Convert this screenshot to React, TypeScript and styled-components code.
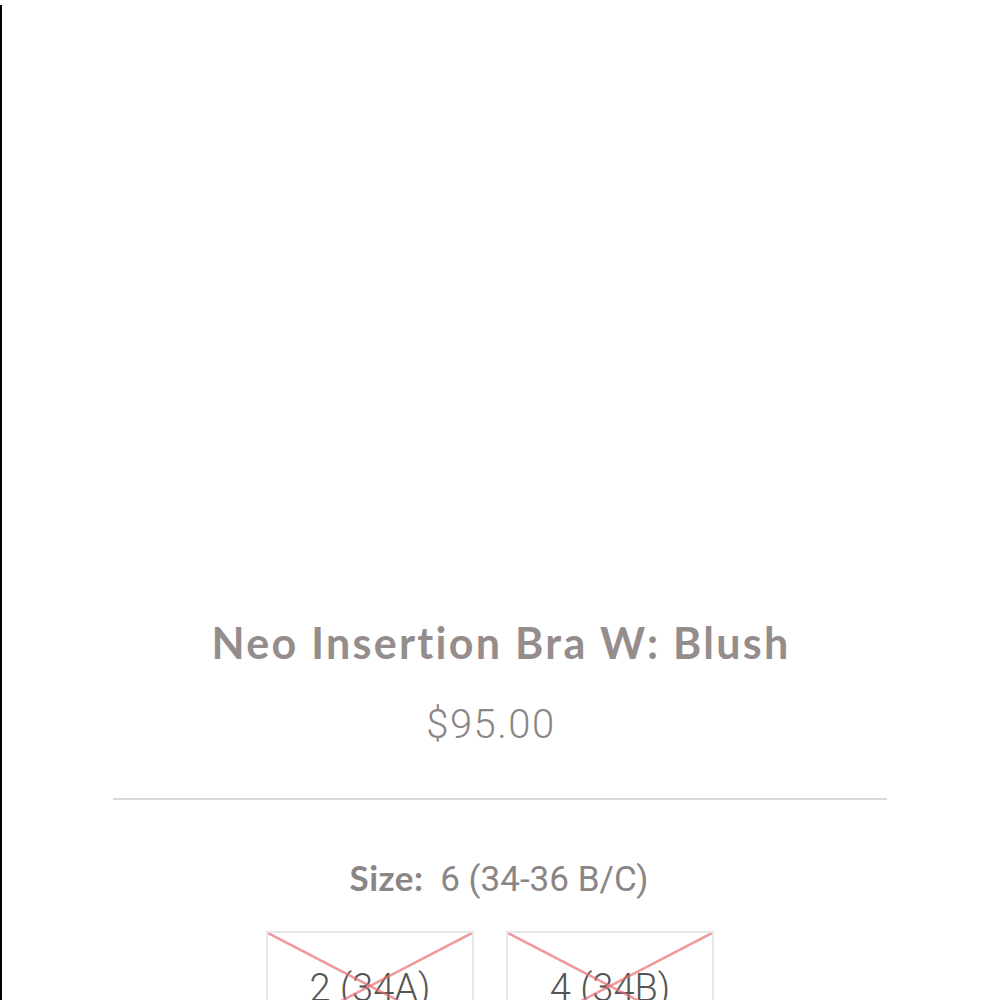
import styled, { createGlobalStyle } from 'styled-components';

const GlobalStyle = createGlobalStyle`
  html, body {
    margin: 0;
    padding: 0;
    background: #fff;
  }
  body {
    font-family: 'Roboto', 'Liberation Sans', sans-serif;
  }
`;

type SizeOption = { label: string; soldOut: boolean };

const sizes: SizeOption[] = [
  { label: '2 (34A)', soldOut: true },
  { label: '4 (34B)', soldOut: true },
];

export default function App() {
  return (
    <>
      <GlobalStyle />
      <Frame>
        <Gallery />
        <Title>Neo Insertion Bra W: Blush</Title>
        <Price>$95.00</Price>
        <Divider />
        <SizeLabel>
          <strong>Size:</strong> 6 (34-36 B/C)
        </SizeLabel>
        <SizeRow>
          {sizes.map((s) => (
            <SizeBox key={s.label}>
              {s.soldOut && (
                <Cross viewBox="0 0 100 100" preserveAspectRatio="none">
                  <line x1="0" y1="0" x2="100" y2="100" />
                  <line x1="100" y1="0" x2="0" y2="100" />
                </Cross>
              )}
              <SizeText>{s.label}</SizeText>
            </SizeBox>
          ))}
        </SizeRow>
      </Frame>
    </>
  );
}

const Frame = styled.div`
  margin-top: 5px;
  height: 995px;
  border-left: 2px solid #000;
  overflow: hidden;
  display: flex;
  flex-direction: column;
  align-items: center;
`;

const Gallery = styled.div`
  height: 613px;
  width: 100%;
  flex-shrink: 0;
`;

const Title = styled.h1`
  margin: 0;
  font-family: 'Lato', sans-serif;
  font-weight: 700;
  font-size: 43px;
  line-height: 50px;
  letter-spacing: 2.3px;
  color: #958c8c;
  text-align: center;
`;

const Price = styled.div`
  margin-top: 34px;
  margin-right: 20px;
  font-family: 'Roboto', sans-serif;
  font-weight: 300;
  font-size: 40px;
  line-height: 46px;
  letter-spacing: 1.5px;
  color: #8c8585;
`;

const Divider = styled.hr`
  margin: 50px 0 0;
  width: 774px;
  border: 0;
  border-top: 2px solid #d9d9d9;
  margin-left: -2px;
`;

const SizeLabel = styled.div`
  margin-top: 56px;
  margin-left: -4px;
  font-family: 'Roboto', sans-serif;
  font-weight: 400;
  font-size: 35px;
  line-height: 42px;
  color: #8c8585;

  strong {
    font-family: 'Lato', sans-serif;
    font-weight: 700;
    margin-right: 8px;
    letter-spacing: 0.5px;
  }
`;

const SizeRow = styled.div`
  margin-top: 30px;
  margin-right: 22px;
  display: flex;
  gap: 32px;
`;

const SizeBox = styled.div`
  position: relative;
  width: 208px;
  height: 110px;
  box-sizing: border-box;
  border: 2px solid #e6e6e6;
  display: flex;
  align-items: center;
  justify-content: center;
`;

const Cross = styled.svg`
  position: absolute;
  inset: 0;
  width: 100%;
  height: 100%;

  line {
    stroke: rgba(232, 110, 115, 0.7);
    stroke-width: 2.5px;
    vector-effect: non-scaling-stroke;
  }
`;

const SizeText = styled.span`
  font-family: 'Roboto', sans-serif;
  font-weight: 300;
  font-size: 38px;
  color: #555;
  padding-top: 4px;
`;
